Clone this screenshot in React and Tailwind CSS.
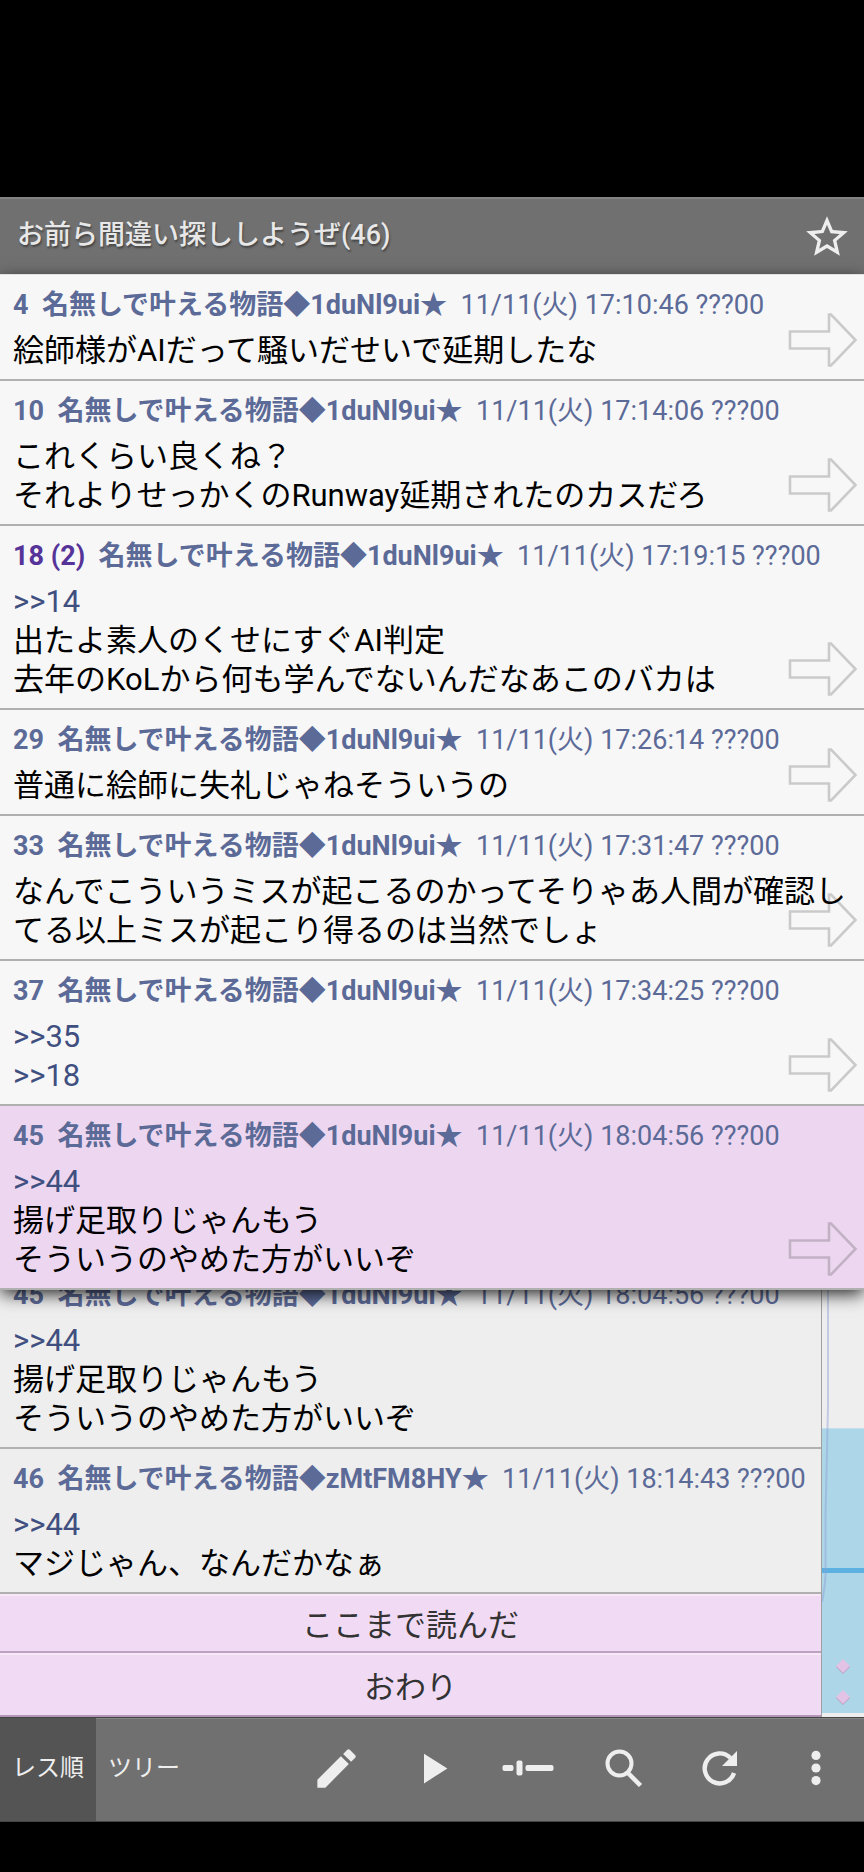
import React from 'react'
import { MdEdit, MdPlayArrow, MdStarBorder } from 'react-icons/md'

const posts = [
    { no : '4', id : '1duNl9ui', date : '11/11(火) 17:10:46 ???00', lines : ['絵師様がAIだって騒いだせいで延期したな'] },
    { no : '10', id : '1duNl9ui', date : '11/11(火) 17:14:06 ???00', lines : ['これくらい良くね？', 'それよりせっかくのRunway延期されたのカスだろ'] },
    { no : '18', replies : 2, id : '1duNl9ui', date : '11/11(火) 17:19:15 ???00', lines : ['>>14', '出たよ素人のくせにすぐAI判定', '去年のKoLから何も学んでないんだなあこのバカは'] },
    { no : '29', id : '1duNl9ui', date : '11/11(火) 17:26:14 ???00', lines : ['普通に絵師に失礼じゃねそういうの'] },
    { no : '33', id : '1duNl9ui', date : '11/11(火) 17:31:47 ???00', lines : ['なんでこういうミスが起こるのかってそりゃあ人間が確認してる以上ミスが起こり得るのは当然でしょ'] },
    { no : '37', id : '1duNl9ui', date : '11/11(火) 17:34:25 ???00', lines : ['>>35', '>>18'] },
    { no : '45', id : '1duNl9ui', date : '11/11(火) 18:04:56 ???00', lines : ['>>44', '揚げ足取りじゃんもう', 'そういうのやめた方がいいぞ'] },
    { no : '46', id : 'zMtFM8HY', date : '11/11(火) 18:14:43 ???00', lines : ['>>44', 'マジじゃん、なんだかなぁ'] },
]

const popupPosts = posts.slice(0, 7)
const threadPosts = posts.slice(6)

const Post = ({post, className, withArrow}) => {
    return (
        <article className={`relative border-b-2 border-[#b0b0b0] px-[13px] pt-[14px] pb-[9px] ${className || ''}`}>
            <h2 className='text-[27px] leading-8 whitespace-pre text-[#5c6a97]'>
                <span className={`font-bold ${post.replies ? 'text-[#553399]' : ''}`}>{post.no}{post.replies ? ` (${post.replies})` : ''}</span>
                <span className='font-bold'>{`  名無しで叶える物語◆${post.id}★  `}</span>
                <time>{post.date}</time>
            </h2>
            <div className='mt-[10px] text-[31px] leading-[39px] text-black'>
            {
                post.lines.map((line)=> line.startsWith('>>') ?
                    <p key={line}><a href={`#${line.slice(2)}`} className='text-[#3f4f7f]'>{line}</a></p>
                    :
                    <p key={line}>{line}</p>
                )
            }
            </div>
            {
                withArrow && <button type='button' aria-label='レスへ移動' className='absolute right-[6px] bottom-[11px]'>
                    <svg width='70' height='56' viewBox='0 0 70 56' fill='none' stroke='#000' strokeOpacity='0.18' strokeWidth='2.6'>
                        <path d='M2 19.5H41V2.5H43L67.5 28L43 53.5H41V36.5H2Z' />
                    </svg>
                </button>
            }
        </article>
    )
}

const Diamond = () => {
    return (
        <svg width='14' height='15' viewBox='0 0 14 15'>
            <path d='M7 1L14 8L7 15L0 8Z' fill='#b79bbd' />
            <path d='M7 0L14 7L7 14L0 7Z' fill='#e2c2e5' />
        </svg>
    )
}

// Overview strip beside the thread
const MiniMap = () => {
    return (
        <aside className='relative w-[43px] flex-none flex flex-col justify-end border-l border-[#a0a0a0] bg-[#eeeeee] pb-1'>
            <div className='h-[285px] bg-[#add6e8] border-t border-[#c4dfeb] flex flex-col'>
                <div className='mt-[139px] h-[5px] bg-[#5cb1e0]' />
                <div className='mt-auto mb-2 flex flex-col items-center gap-4'>
                    <Diamond />
                    <Diamond />
                </div>
            </div>
            <svg className='absolute bottom-0 left-0' width='12' height='460' viewBox='0 0 12 460' fill='none'>
                <path d='M6 0V150L3.5 260V318Q3 330 0 345' stroke='#8f9fd8' strokeOpacity='0.45' strokeWidth='2' />
            </svg>
        </aside>
    )
}

const ToolButton = ({label, children}) => {
    return (
        <button type='button' aria-label={label} className='flex items-center justify-center border-t border-[#858585] pb-1 text-[#eeeeee]'>
            {children}
        </button>
    )
}

const App = () => {
    return (
        <div className="min-h-screen bg-black flex flex-col font-['Roboto','Noto_Sans_CJK_JP',sans-serif]" lang='ja'>
            {/* Title bar */}
            <header className='mt-[197px] h-[77px] flex flex-row items-center justify-between bg-[#707070] border-t-2 border-[#828282] pl-[17px] pr-3'>
                <h1 className='pb-1 text-[27px] leading-9 font-medium text-[#e8e8e8] [text-shadow:1px_2px_2px_rgba(0,0,0,0.4)]'>お前ら間違い探ししようぜ(46)</h1>
                <button type='button' aria-label='お気に入り' className='text-[#eeeeee]'>
                    <MdStarBorder size={50} />
                </button>
            </header>

            <main className='relative flex-1 flex flex-row bg-[#eeeeee]'>
                {/* Thread */}
                <section className='flex-1 min-w-0 flex flex-col justify-end'>
                    {
                        threadPosts.map((post)=> <Post key={post.no} post={post} />)
                    }
                    <button type='button' className='h-[59px] w-full border-t-2 border-t-[#f6e8f7] border-b-2 border-b-[#bda3c1] bg-[#f1daf3] pt-1 text-[31px] leading-[39px] text-[#333333]'>ここまで読んだ</button>
                    <button type='button' className='h-[64px] w-full border-t-2 border-t-[#f6e8f7] border-b-2 border-b-[#b295b7] bg-[#f1daf3] pt-1 text-[31px] leading-[39px] text-[#333333]'>おわり</button>
                </section>
                <MiniMap />

                {/* Extracted posts */}
                <section className='absolute inset-x-0 top-0 border-t border-[#e0e0e0] bg-[#f7f7f7] shadow-[0_5px_16px_-1px_rgba(0,0,0,0.85)]'>
                    {
                        popupPosts.map((post, index)=> <Post key={post.no} post={post} withArrow className={index === popupPosts.length - 1 ? 'bg-[#edd7f0]' : ''} />)
                    }
                </section>
            </main>

            {/* Toolbar */}
            <footer className='mb-[50px] h-[105px] grid grid-cols-9 bg-[#707070] border-y border-[#444444] text-2xl text-[#eeeeee]'>
                <button type='button' className='bg-[#545454] pb-1'>レス順</button>
                <button type='button' className='border-t border-[#858585] pb-1'>ツリー</button>
                <div className='border-t border-[#858585]' />
                <ToolButton label='書き込み'><MdEdit size={51} /></ToolButton>
                <ToolButton label='再生'><MdPlayArrow size={51} /></ToolButton>
                <ToolButton label='スライダー'>
                    <svg width='52' height='16' viewBox='0 0 52 16' fill='currentColor'>
                        <rect x='0.5' y='5' width='11' height='6' rx='2' />
                        <rect x='14.5' y='0.5' width='6' height='15' rx='2' />
                        <rect x='23.5' y='5' width='28' height='6' rx='2' />
                    </svg>
                </ToolButton>
                <ToolButton label='検索'>
                    <svg width='38' height='38' viewBox='0 0 38 38' fill='none' stroke='currentColor' strokeWidth='4'>
                        <circle cx='14.5' cy='14.5' r='12' />
                        <path d='M23.5 24.5L35.5 36.5' strokeWidth='4.5' />
                    </svg>
                </ToolButton>
                <ToolButton label='更新'>
                    <svg width='36' height='36' viewBox='0 0 36 36' fill='none'>
                        <path d='M28.5 8A15 15 0 1 0 32 23' stroke='currentColor' strokeWidth='4.4' />
                        <path d='M35 1V16H20Z' fill='currentColor' />
                    </svg>
                </ToolButton>
                <ToolButton label='メニュー'>
                    <svg width='10' height='36' viewBox='0 0 10 36' fill='currentColor'>
                        <circle cx='5' cy='5.4' r='4.6' />
                        <circle cx='5' cy='18' r='4.6' />
                        <circle cx='5' cy='30.6' r='4.6' />
                    </svg>
                </ToolButton>
            </footer>
        </div>
    )
}

export default App
